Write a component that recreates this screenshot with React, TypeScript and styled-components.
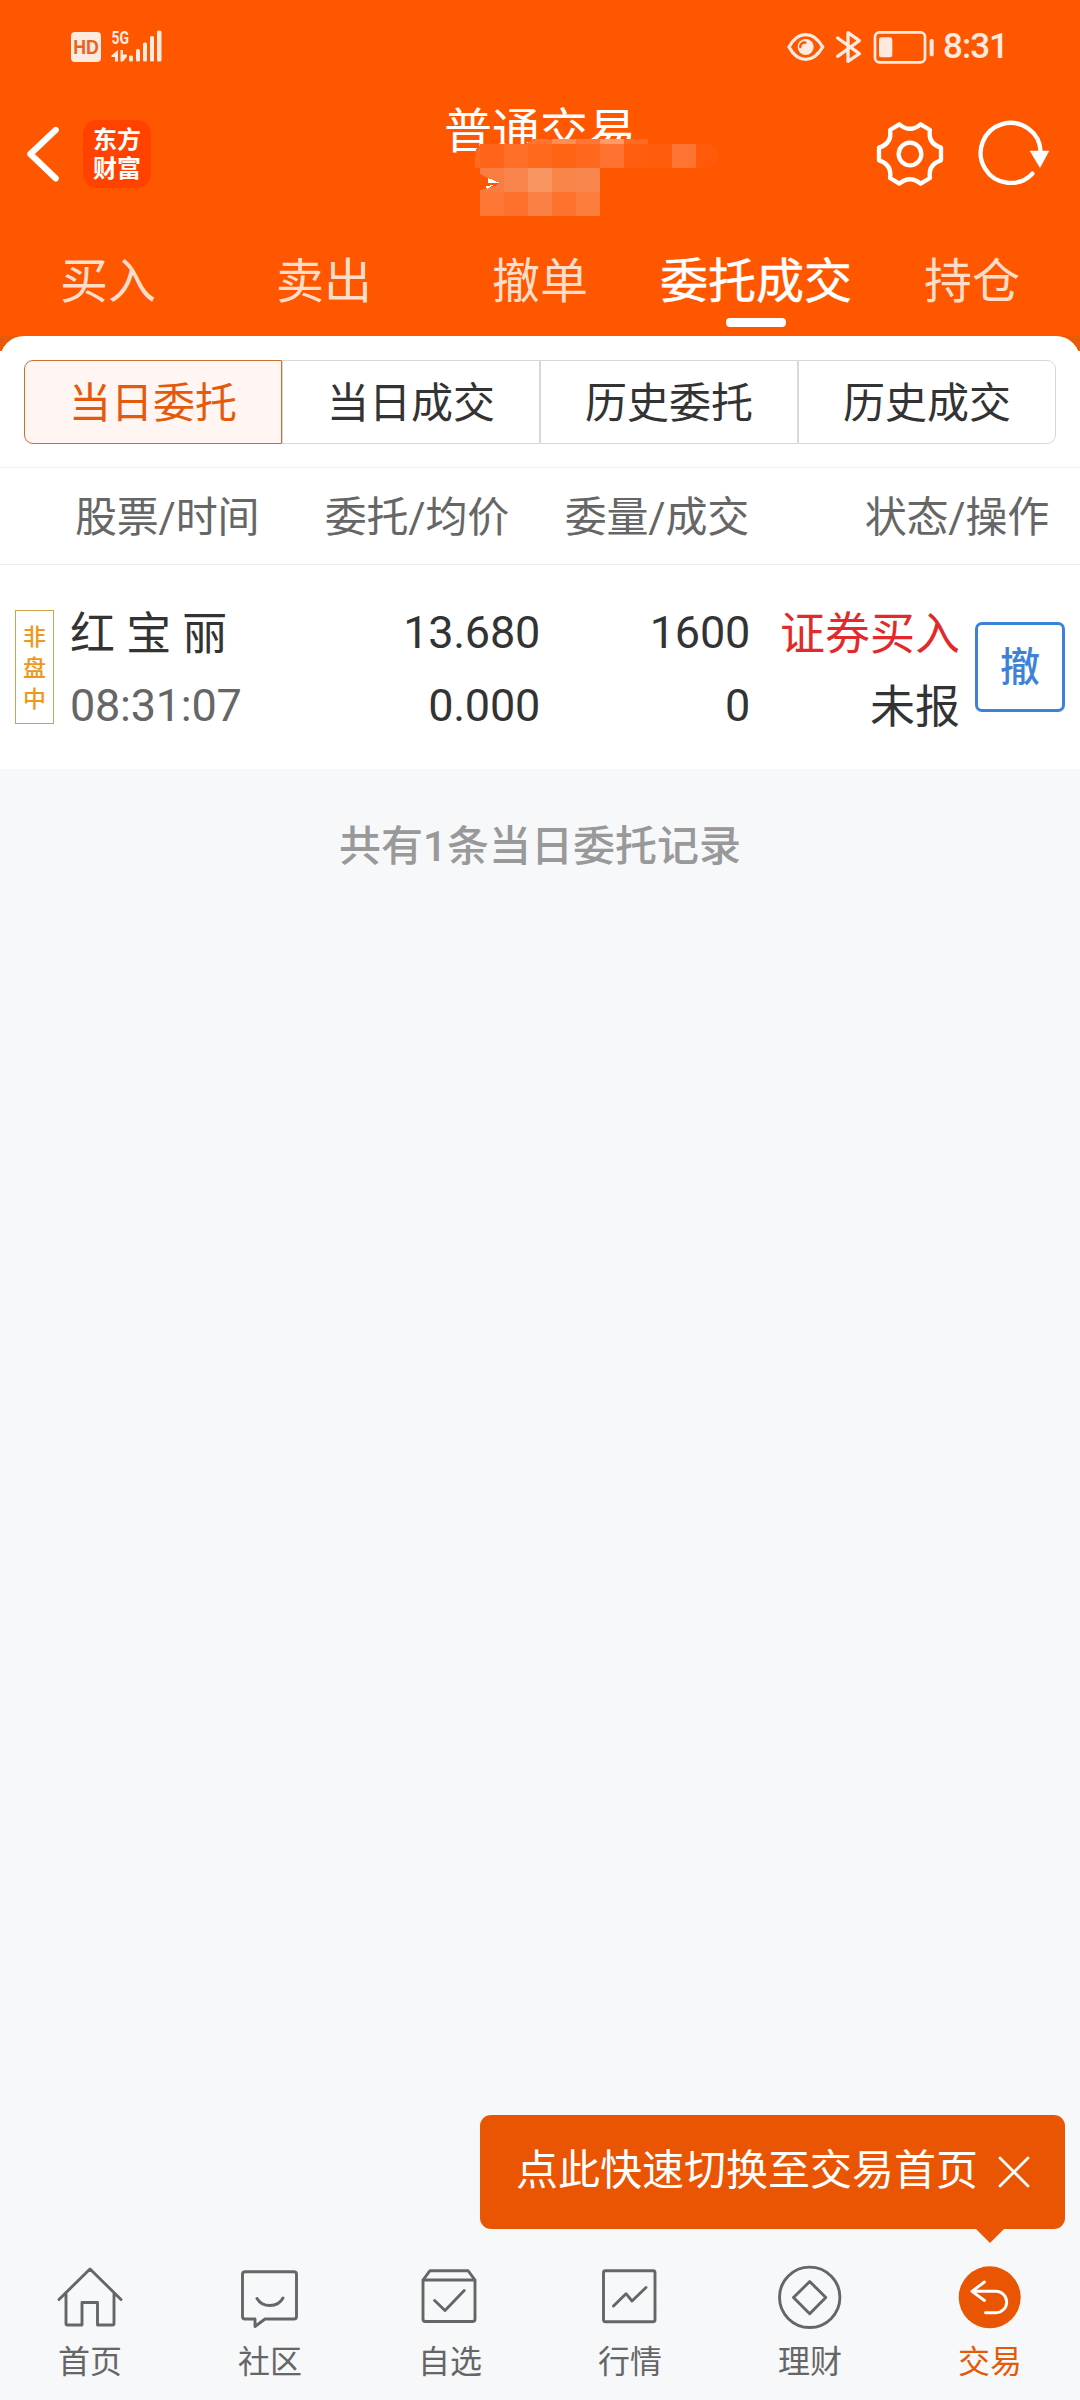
import React from "react";
import styled, { createGlobalStyle } from "styled-components";

const Global = createGlobalStyle`
  * { box-sizing: border-box; }
  body { margin: 0; background: #f7f8fa; }
`;

const Screen = styled.div`
  position: relative;
  display: flex;
  flex-direction: column;
  width: 1080px;
  height: 2400px;
  overflow: hidden;
  background: #f7f8fa;
  color: #333;
  font-family: Roboto, "Noto Sans CJK SC", sans-serif;
`;

const Header = styled.header`
  height: 336px;
  background: #ff5600;
  color: #fff;
`;

const StatusBar = styled.div`
  display: flex;
  justify-content: space-between;
  height: 94px;
  padding: 0 72px 0 70px;
`;

const StatusGroup = styled.div`
  display: flex;
  align-items: center;
  color: #ffeae0;
`;

const Clock = styled.span`
  margin-left: 8px;
  font-size: 35px;
  font-weight: 500;
  line-height: 96px;
  letter-spacing: -1px;
`;

const TitleBar = styled.div`
  position: relative;
  display: grid;
  grid-template-columns: 1fr auto 1fr;
  align-items: center;
  height: 120px;
`;

const BarSide = styled.div<{ $end?: boolean }>`
  display: flex;
  align-items: center;
  justify-content: ${(p) => (p.$end ? "flex-end" : "flex-start")};
  padding: ${(p) => (p.$end ? "0 30px 0 0" : "0 0 0 24px")};
  gap: ${(p) => (p.$end ? "34px" : "23px")};
`;

const Title = styled.h1`
  align-self: start;
  margin: 0;
  padding-top: 3px;
  font-size: 48px;
  font-weight: 400;
  line-height: 70px;
`;

const Mosaic = styled.svg`
  position: absolute;
  left: 470px;
  top: 44px;
`;

const AppLogo = styled.div`
  display: flex;
  flex-direction: column;
  align-items: center;
  justify-content: center;
  width: 68px;
  height: 68px;
  padding-top: 1px;
  border-radius: 14px;
  background: #ff4200;
  font-size: 24px;
  font-weight: 700;
  line-height: 29px;
`;

const Tabs = styled.nav`
  display: grid;
  grid-template-columns: repeat(5, 1fr);
  height: 122px;
`;

const Tab = styled.div<{ $active?: boolean }>`
  display: flex;
  flex-direction: column;
  align-items: center;
  padding-top: 33px;
  font-size: 48px;
  line-height: 70px;
  color: ${(p) => (p.$active ? "#fff" : "#ffddc8")};
  white-space: nowrap;
  -webkit-text-stroke: ${(p) => (p.$active ? "0.5px #fff" : "0")};
`;

const TabLine = styled.span`
  width: 60px;
  height: 9px;
  margin-top: 1px;
  border-radius: 4px;
  background: #fff;
`;

const PanelBack = styled.section`
  background: linear-gradient(#e85a08 15px, #fff 15px);
`;

const Panel = styled.div`
  border-radius: 24px 24px 0 0;
  background: #fff;
`;

const Segments = styled.div`
  display: grid;
  grid-template-columns: repeat(4, 1fr);
  height: 131px;
  padding: 24px 24px 23px;
`;

const Segment = styled.div<{ $active?: boolean }>`
  height: 84px;
  border: 1px solid ${(p) => (p.$active ? "#c8712f" : "#d6d8d9")};
  background: ${(p) => (p.$active ? "#fff6f3" : "#fff")};
  color: ${(p) => (p.$active ? "#e5590a" : "#333")};
  font-size: 42px;
  line-height: 86px;
  text-align: center;
  &:first-child { border-radius: 9px 0 0 9px; }
  &:last-child { border-radius: 0 9px 9px 0; }
`;

const Columns = styled.div`
  display: grid;
  grid-template-columns: 434px 240px 300px;
  height: 98px;
  padding-left: 75px;
  border-top: 1px solid #f2f2f2;
  border-bottom: 1px solid #ececec;
  color: #666;
  font-size: 42px;
  line-height: 100px;
  letter-spacing: -0.2px;
  text-align: right;
`;

const ColumnPair = styled.div`
  display: flex;
  justify-content: space-between;
`;

const Order = styled.div`
  display: flex;
  height: 204px;
  padding: 31px 15px 0;
  font-size: 45px;
  line-height: 73px;
`;

const Badge = styled.div`
  display: flex;
  flex-direction: column;
  align-items: center;
  justify-content: center;
  width: 39px;
  height: 114px;
  margin: 14px 16px 0 0;
  padding-top: 2px;
  border: 1px solid #d3a34b;
  color: #f0961a;
  font-size: 23px;
  font-weight: 500;
  line-height: 31px;
`;

const Cell = styled.div<{ $width: number; $left?: boolean }>`
  width: ${(p) => p.$width}px;
  text-align: ${(p) => (p.$left ? "left" : "right")};
  white-space: nowrap;
`;

const Line = styled.div<{ $tone?: string; $han?: boolean }>`
  height: 73px;
  padding-top: ${(p) => (p.$han ? 2 : 0)}px;
  color: ${(p) => p.$tone || "#333"};
  letter-spacing: ${(p) => (p.$han ? 0 : -0.25)}px;
`;

const CancelButton = styled.button`
  width: 90px;
  height: 90px;
  margin: 26px 0 0 15px;
  padding: 2px 0 0;
  border: 3px solid #3c83d8;
  border-radius: 7px;
  background: #fff;
  color: #3c83d8;
  font: 500 40px/82px Roboto, "Noto Sans CJK SC", sans-serif;
`;

const Summary = styled.main`
  flex: 1;
  padding-top: 43px;
  color: #999;
  font-size: 42px;
  font-weight: 500;
  line-height: 70px;
  text-align: center;
`;

const Tip = styled.aside`
  position: absolute;
  left: 480px;
  top: 2115px;
  display: flex;
  align-items: center;
  justify-content: space-between;
  width: 585px;
  height: 114px;
  padding: 0 35px 0 36px;
  border-radius: 11px;
  background: #ea5504;
  color: #fff;
  font-size: 42px;
  &::after {
    content: "";
    position: absolute;
    right: 60px;
    top: 113px;
    border: 15px solid transparent;
    border-top-color: #ea5504;
    border-bottom: 0;
  }
`;

const TipText = styled.span`
  height: 114px;
  line-height: 112px;
`;

const BottomNav = styled.nav`
  display: grid;
  grid-template-columns: repeat(6, 1fr);
  height: 136px;
`;

const NavItem = styled.div<{ $active?: boolean }>`
  display: flex;
  flex-direction: column;
  align-items: center;
  color: ${(p) => (p.$active ? "#e55a0a" : "#666")};
  font-size: 32px;
  line-height: 48px;
  gap: 8px;
`;

const SignalIcons = () => (
  <svg width="94" height="54" viewBox="70 20 94 54" fill="#ffeae0">
    <rect x="71" y="32" width="30" height="30" rx="4" />
    <text x="73.2" y="54.3" fontSize="19.5" fontWeight="700" fontFamily="Liberation Sans, sans-serif" fill="#e8631f" textLength="25.6" lengthAdjust="spacingAndGlyphs">HD</text>
    <text x="111.5" y="44.3" fontSize="19" fontWeight="700" fontFamily="Roboto, sans-serif" textLength="17.5" lengthAdjust="spacingAndGlyphs">5G</text>
    <path d="M118 50v11.5h-3V57h-3.5v-1.5zM120.500 50h2.500v4.500h4v2l-4 5h-2.500z" />
    <rect x="129" y="55.500" width="4" height="6" rx="1.500" />
    <rect x="136" y="49" width="4" height="12.500" rx="1.500" />
    <rect x="143" y="42.500" width="4" height="19" rx="1.500" />
    <rect x="150" y="36" width="4" height="25.500" rx="1.500" />
    <rect x="157" y="30.500" width="4.500" height="31" rx="1.500" />
  </svg>
);

const DeviceIcons = () => (
  <svg width="148" height="36" viewBox="82 84 444 108" fill="none" stroke="#ffeae0">
    <path d="M88 138Q108 101 138 101T189 138Q168 175 138 175T88 138Z" strokeWidth="10" />
    <circle cx="138" cy="138" r="24" fill="#ffeae0" stroke="none" />
    <path d="M122 138a12 12 0 0 1 15-13" stroke="#ff5600" strokeWidth="7" strokeLinecap="round" />
    <path d="M234 111L299 158L265 181V95L299 119L234 166" strokeWidth="10" strokeLinejoin="round" strokeLinecap="round" />
    <rect x="346" y="94" width="150" height="90" rx="13" strokeWidth="8" />
    <rect x="358" y="109" width="40" height="60" rx="7" fill="#ffeae0" stroke="none" />
    <rect x="510" y="114" width="12" height="52" rx="5" fill="#ffeae0" stroke="none" />
  </svg>
);

const BackIcon = () => (
  <svg width="36" height="58" viewBox="72 376 108 174" fill="none" stroke="#fff" strokeWidth="19" strokeLinecap="round" strokeLinejoin="round">
    <path d="M167 391L91 463L167 536" />
  </svg>
);

const GearIcon = () => (
  <svg width="68" height="68" viewBox="350 360 204 204" fill="none" stroke="#fff" strokeWidth="13" strokeLinejoin="round">
    <path d="M420 373Q452 400 484 373L512 390Q505 430 545 443V481Q505 494 512 534L484 551Q452 524 420 551L392 534Q399 494 359 481V443Q399 430 392 390Z" />
    <circle cx="452" cy="462" r="34" />
  </svg>
);

const RefreshIcon = () => (
  <svg width="72" height="68" viewBox="655 360 216 204" fill="none" stroke="#fff" strokeWidth="13">
    <path d="M843 456A90 90 0 1 0 818 521" strokeLinecap="round" />
    <path d="M810 452H869L841 504Z" fill="#fff" stroke="none" />
  </svg>
);

const mosaicCells: [number, number, string][] = [
  [0, 0, "#ff641a"], [1, 0, "#ff6f28"], [2, 0, "#ff681c"], [3, 0, "#ff6415"], [4, 0, "#ff681d"], [5, 0, "#ff7230"],
  [6, 0, "#ff5e0f"], [7, 0, "#ff5c0c"], [8, 0, "#ff7433"],
  [0, 1, "#f97c40"], [1, 1, "#fa854c"], [2, 1, "#f89560"], [3, 1, "#f98448"], [4, 1, "#f9874d"],
  [0, 2, "#ff7735"], [1, 2, "#fe712c"], [2, 2, "#fa8146"], [3, 2, "#fd722c"], [4, 2, "#fc7d3c"],
];

const MosaicPatch = () => (
  <Mosaic width="260" height="82" viewBox="470 138 260 82" shapeRendering="crispEdges">
    <path d="M483 144H526L534 139H648V144H710Q719 150 719 156T708 168H474V157Q475 147 483 144Z" fill="#ff5a0a" />
    <path d="M526 144Q531 139 538 139H552V144Z" fill="#ff7330" />
    <path d="M483 144L480 146V168H475V157Q476 148 483 144Z" fill="#ff6a21" />
    <rect x="552" y="139" width="24" height="5" fill="#ff8b55" />
    <rect x="576" y="139" width="24" height="5" fill="#ff7536" />
    <rect x="600" y="139" width="24" height="5" fill="#ff9a6b" />
    <rect x="624" y="139" width="24" height="5" fill="#ff6a21" />
    {mosaicCells.map(([x, y, fill]) => (
      <rect key={`${x}-${y}`} x={480 + x * 24} y={144 + y * 24} width="24" height="24" fill={fill} />
    ))}
    <path d="M480 174Q488 178 500 183Q491 189 480 190Z" fill="#ff5600" />
    <path d="M488 178L500 183H488ZM486 186L494 185L487 189Z" fill="#fff" />
  </Mosaic>
);

const NavSvg = ({ children }: { children: React.ReactNode }) => (
  <svg width="66" height="66" viewBox="0 0 66 66" fill="none" stroke="currentColor" strokeWidth="2.900" strokeLinejoin="round" strokeLinecap="round">
    {children}
  </svg>
);

const navItems = [
  { label: "首页", icon: <path d="M2 35.500L33 5L64 35.500M9 30V60Q9 61 10 61H25V38.500H40.500V61H56Q57 61 57 60V30" /> },
  { label: "社区", icon: <path d="M8.500 7.700H57Q59.500 7.700 59.500 10.200V52.500Q59.500 55 57 55H28L18 62.500V55H8Q5.500 55 5.500 52.500V10.200Q5.500 7.700 8.500 7.700ZM20 34.500Q24 41.500 33 41.500T46 34" /> },
  { label: "自选", icon: <path d="M6 16L13 6.700H51L58 16M6 16H58V55Q58 57.500 55.500 57.500H8.500Q6 57.500 6 55ZM17.600 36.500L28 46.500L47.200 26.500" /> },
  { label: "行情", icon: <path d="M8.500 6.700H56Q58 6.700 58 8.700V55.700Q58 57.700 56 57.700H8.500Q6.500 57.700 6.500 55.700V8.700Q6.500 6.700 8.500 6.700ZM16.500 42L29 29.700L35 37L49 23.500" /> },
  { label: "理财", icon: <><circle cx="32.700" cy="33.300" r="30.200" /><path d="M32.700 17.500L48.800 33.500L32.700 49.800L16.500 33.500Z" /></> },
  { label: "交易", active: true, icon: <><circle cx="32.700" cy="33.300" r="31" fill="#ea5504" stroke="none" /><path stroke="#fff" d="M27.500 18L15 27.300L27.500 36.500M15 27.300H39A10.700 10.700 0 0 1 39 48.700H28.500" /></> },
];

const tabs = ["买入", "卖出", "撤单", "委托成交", "持仓"];
const segments = ["当日委托", "当日成交", "历史委托", "历史成交"];

export default function App() {
  return (
    <Screen>
      <Global />
      <Header>
        <StatusBar>
          <StatusGroup><SignalIcons /></StatusGroup>
          <StatusGroup><DeviceIcons /><Clock>8:31</Clock></StatusGroup>
        </StatusBar>
        <TitleBar>
          <BarSide>
            <BackIcon />
            <AppLogo><span>东方</span><span>财富</span></AppLogo>
          </BarSide>
          <Title>普通交易</Title>
          <BarSide $end><GearIcon /><RefreshIcon /></BarSide>
          <MosaicPatch />
        </TitleBar>
        <Tabs>
          {tabs.map((t, i) => (
            <Tab key={t} $active={i === 3}>{t}{i === 3 && <TabLine />}</Tab>
          ))}
        </Tabs>
      </Header>
      <PanelBack>
        <Panel>
          <Segments>
            {segments.map((s, i) => <Segment key={s} $active={i === 0}>{s}</Segment>)}
          </Segments>
          <Columns>
            <ColumnPair><span>股票/时间</span><span>委托/均价</span></ColumnPair>
            <span>委量/成交</span>
            <span>状态/操作</span>
          </Columns>
          <Order>
            <Badge><span>非</span><span>盘</span><span>中</span></Badge>
            <Cell $width={185} $left>
              <Line $han>红 宝 丽</Line>
              <Line $tone="#666">08:31:07</Line>
            </Cell>
            <Cell $width={285}><Line>13.680</Line><Line>0.000</Line></Cell>
            <Cell $width={210}><Line>1600</Line><Line>0</Line></Cell>
            <Cell $width={210}><Line $han $tone="#e22a2a">证券买入</Line><Line $han>未报</Line></Cell>
            <CancelButton>撤</CancelButton>
          </Order>
        </Panel>
      </PanelBack>
      <Summary>共有1条当日委托记录</Summary>
      <BottomNav>
        {navItems.map((n) => (
          <NavItem key={n.label} $active={n.active}><NavSvg>{n.icon}</NavSvg>{n.label}</NavItem>
        ))}
      </BottomNav>
      <Tip>
        <TipText>点此快速切换至交易首页</TipText>
        <svg width="32" height="32" viewBox="0 0 32 32" stroke="#fff" strokeWidth="2.700" strokeLinecap="round">
          <path d="M2 2L30 30M30 2L2 30" />
        </svg>
      </Tip>
    </Screen>
  );
}
